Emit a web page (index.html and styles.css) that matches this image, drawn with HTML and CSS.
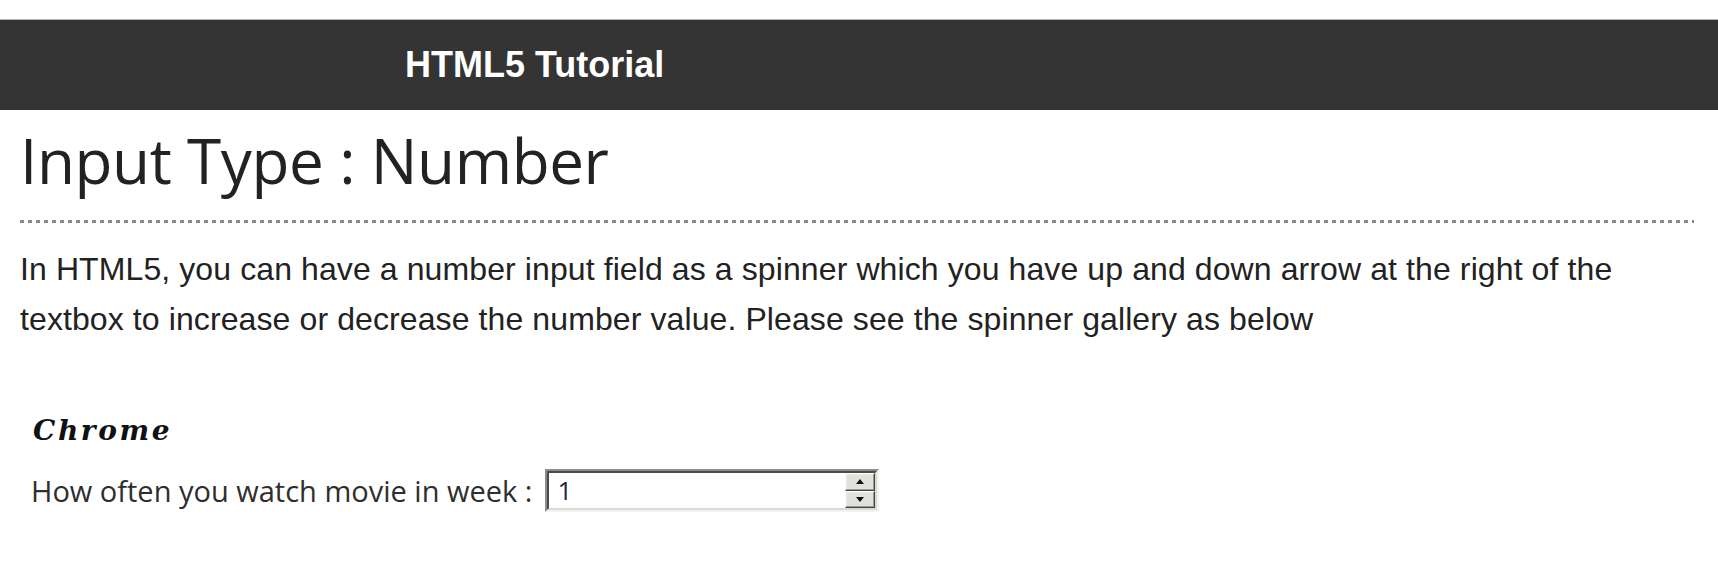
FILE: index.html
```html
<!DOCTYPE html>
<html lang="en">
<head>
<meta charset="utf-8">
<title>Input Type : Number</title>
<link rel="stylesheet" href="styles.css">
</head>
<body>
<header class="topbar">
  <div class="brand">HTML5 Tutorial</div>
</header>
<main class="content">
  <h1 class="title">Input Type : Number</h1>
  <div class="rule"></div>
  <p class="intro">In HTML5, you can have a number input field as a spinner which you have up and down arrow at the right of the textbox to increase or decrease the number value. Please see the spinner gallery as below</p>
  <section class="gallery">
    <h3 class="browser">Chrome</h3>
    <div class="field-row">
      <span class="label">How often you watch movie in week :</span>
      <div class="spin">
        <div class="spin-inner">
          <span class="val">1</span>
          <div class="btns">
            <span class="btn"><svg width="8" height="5" viewBox="0 0 8 5"><path d="M0 5 L4 0 L8 5 Z" fill="#111"/></svg></span>
            <span class="btn"><svg width="8" height="5" viewBox="0 0 8 5"><path d="M0 0 L4 5 L8 0 Z" fill="#111"/></svg></span>
          </div>
        </div>
      </div>
    </div>
  </section>
</main>
</body>
</html>
```

FILE: styles.css
```css
html, body {
  margin: 0;
  padding: 0;
  background: #fff;
}

.topbar {
  margin-top: 19px;
  border-top: 1px solid #b4b4b4;
  height: 90px;
  background: #343434;
  display: flex;
  align-items: center;
  padding-left: 405px;
}

.brand {
  font-family: "Liberation Sans", Arial, sans-serif;
  font-weight: bold;
  font-size: 36px;
  color: #fff;
}

.content {
  padding: 0 24px 0 20px;
}

.title {
  margin: 13px 0 0 0;
  font-family: "Open Sans", sans-serif;
  font-weight: 400;
  font-size: 62px;
  line-height: 74px;
  color: #222;
  letter-spacing: -0.4px;
}

.rule {
  margin-top: 23px;
  height: 3px;
  background: repeating-linear-gradient(90deg, #888 0 4px, transparent 4px 8px);
}

.intro {
  margin: 21px 0 0 0;
  font-family: "Liberation Sans", Arial, sans-serif;
  font-size: 32px;
  line-height: 50px;
  letter-spacing: 0.1px;
  color: #222;
}

.gallery {
  padding-left: 11px;
  margin-top: 70px;
}

.browser {
  margin: 0 0 0 2px;
  font-family: "DejaVu Serif", serif;
  font-style: italic;
  font-weight: bold;
  font-size: 28px;
  line-height: 34px;
  letter-spacing: 2.6px;
  color: #111;
}

.field-row {
  margin-top: 21px;
  display: flex;
  align-items: center;
  gap: 13px;
}

.label {
  font-family: "Open Sans", sans-serif;
  font-size: 29px;
  line-height: 43px;
  color: #2e2e2e;
}

.spin {
  width: 334px;
  height: 43px;
  box-sizing: border-box;
  border: 2px solid;
  border-color: #8c8c8c #f2f2f2 #f2f2f2 #8c8c8c;
}

.spin-inner {
  height: 100%;
  box-sizing: border-box;
  border: 2px solid;
  border-color: #4a4a4a #dcd9d2 #dcd9d2 #4a4a4a;
  background: #fff;
  display: flex;
}

.val {
  flex: 1;
  padding-left: 8px;
  font-family: "Open Sans", sans-serif;
  font-size: 26px;
  line-height: 35px;
  color: #2a2244;
}

.btns {
  width: 30px;
  display: flex;
  flex-direction: column;
}

.btn {
  flex: 1;
  box-sizing: border-box;
  background: #e2e0da;
  border: 1px solid;
  border-color: #fafafa #444 #444 #fafafa;
  box-shadow: inset -1px -1px 0 #9a9a9a, inset 1px 1px 0 #ecebe6;
  display: flex;
  align-items: center;
  justify-content: center;
}
```
